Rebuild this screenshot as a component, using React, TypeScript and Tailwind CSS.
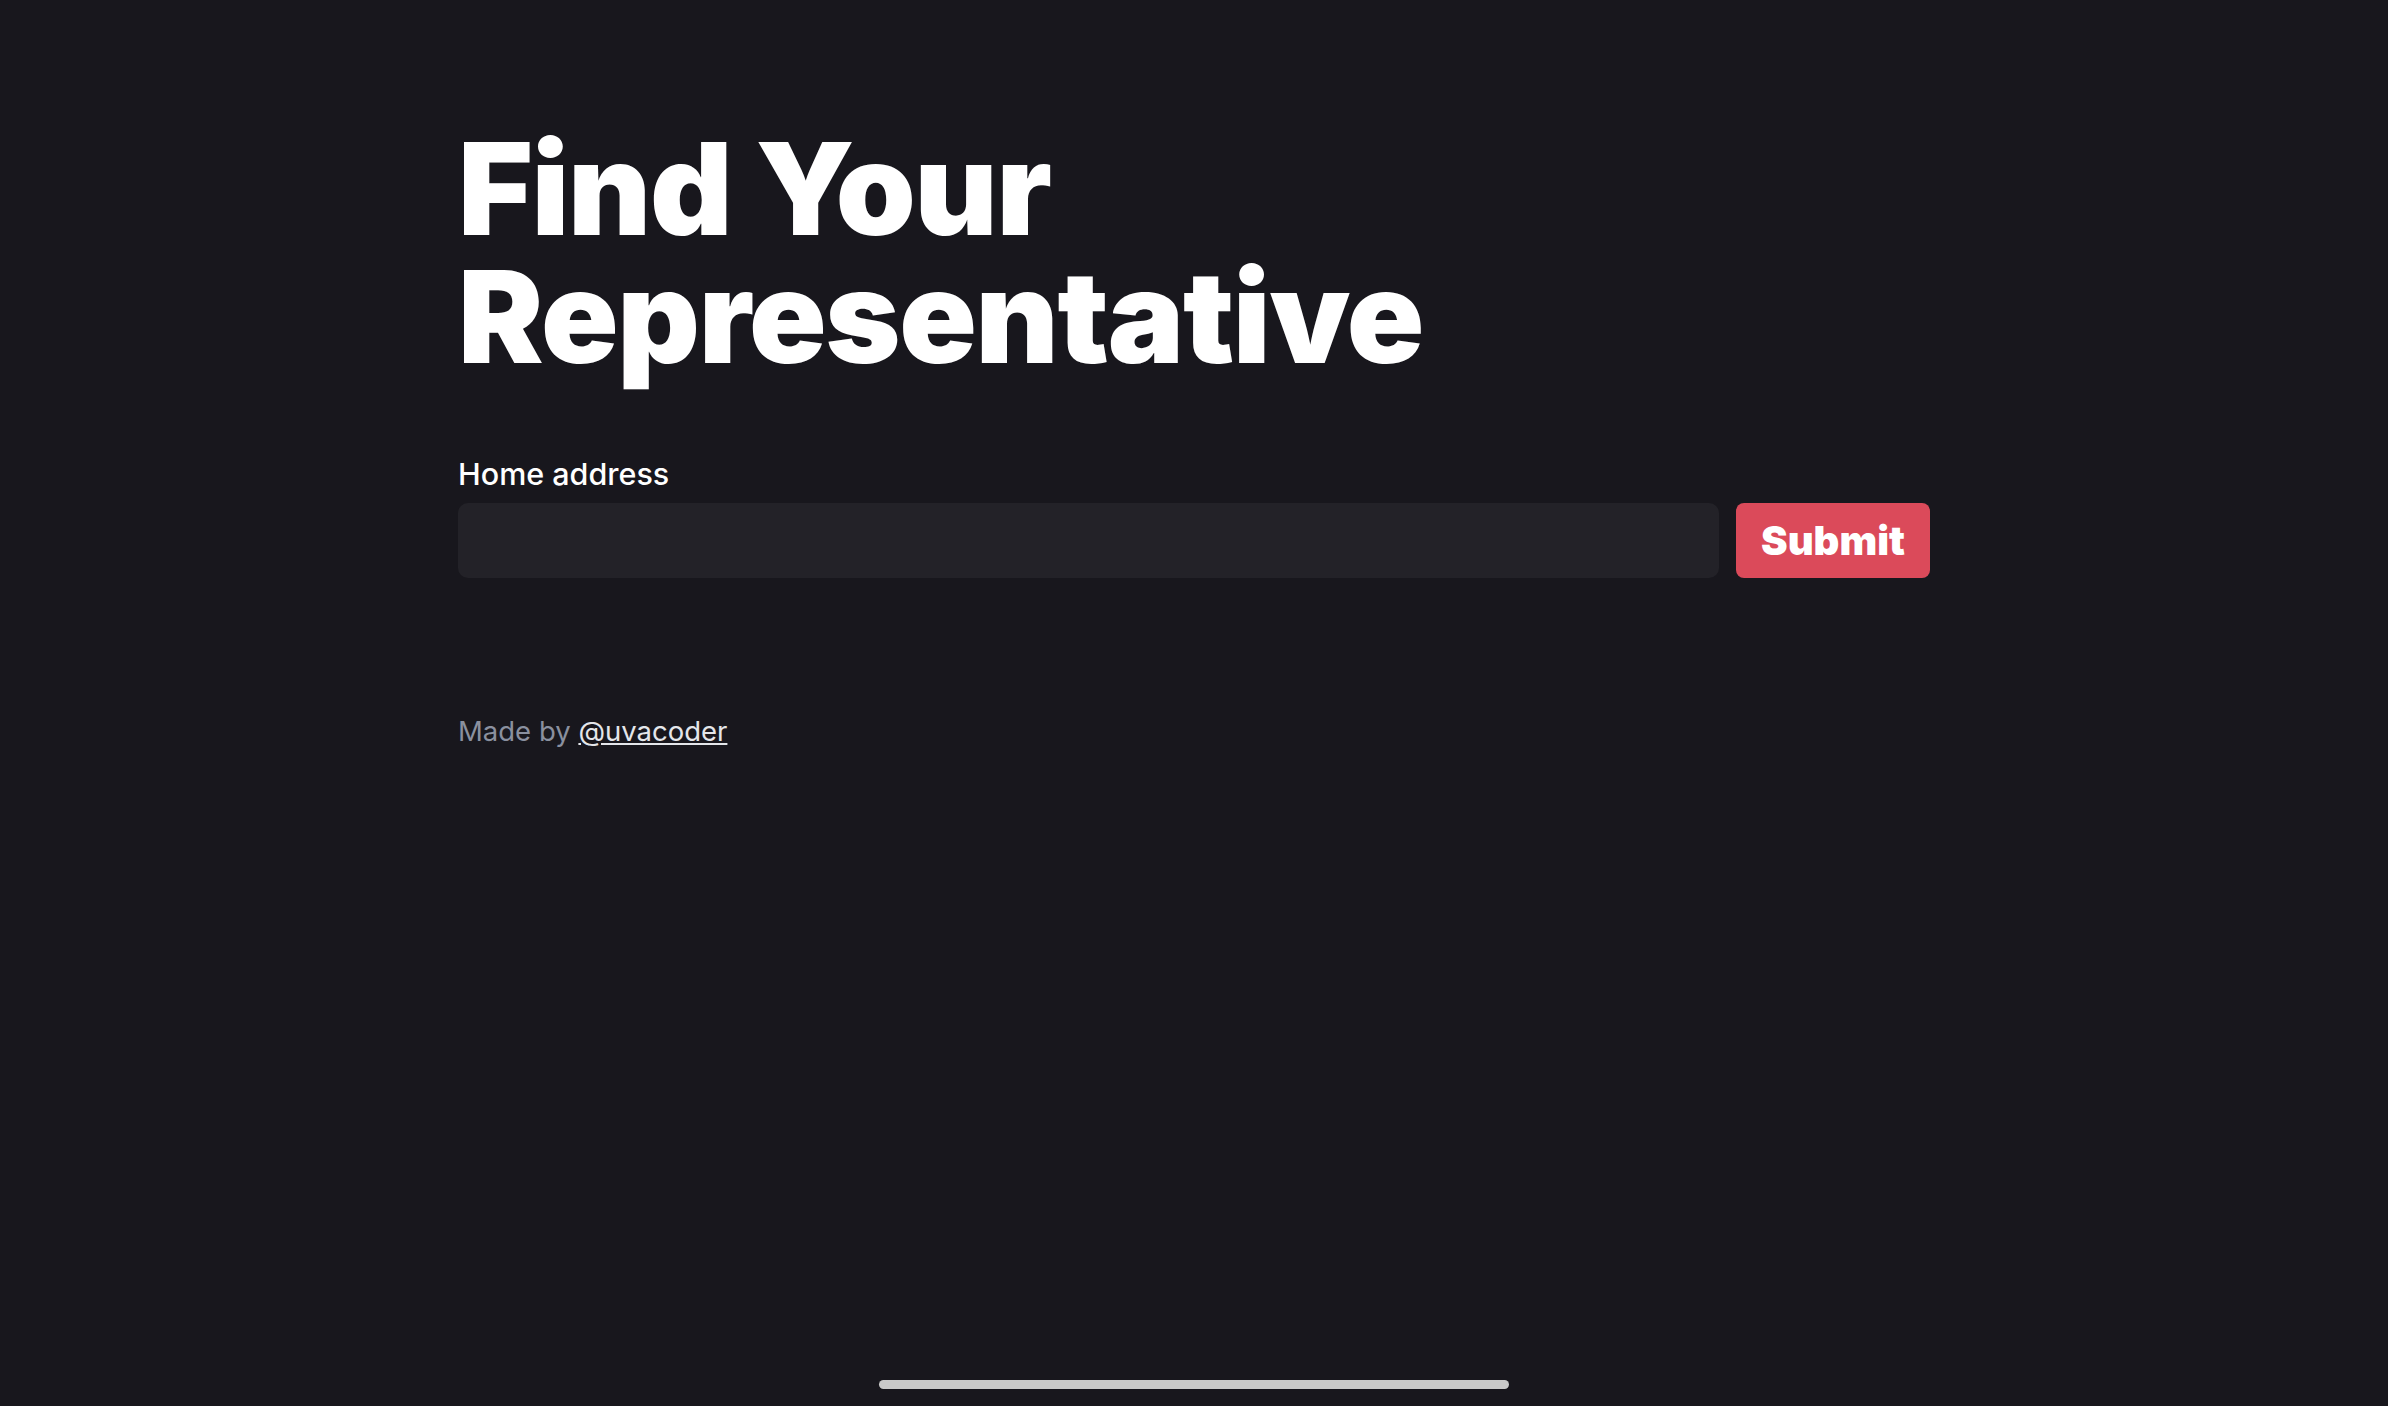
export default function App() {
  return (
    <div className="relative min-h-screen bg-[#18171d] font-['Inter',sans-serif]">
      <main className="mx-auto w-[1472px] pt-[125px]">
        <h1 className="text-[128px] leading-none font-black tracking-[-0.01em] text-white">
          Find Your
          <br />
          Representative
        </h1>
        <form className="mt-[70px]" onSubmit={(e) => e.preventDefault()}>
          <label className="block text-[30.5px] leading-[45px] font-medium text-white">
            Home address
          </label>
          <div className="mt-[7px] flex gap-[17px]">
            <input
              type="text"
              className="h-[75px] flex-1 rounded-[10px] bg-[#232228] px-4 text-[30px] text-white outline-none"
            />
            <button
              type="submit"
              className="h-[75px] w-[194px] rounded-[8px] bg-[#db4a5a] text-[40px] font-black text-white"
            >
              Submit
            </button>
          </div>
        </form>
        <p className="mt-[134px] text-[27.5px] leading-[39px] text-[#8a909f]">
          Made by{" "}
          <a href="#" className="text-[#e4e6ea] underline">
            @uvacoder
          </a>
        </p>
      </main>
      <div className="absolute bottom-[17px] left-[879px] h-[9px] w-[630px] rounded-full bg-[#c9c9c9]" />
    </div>
  );
}
